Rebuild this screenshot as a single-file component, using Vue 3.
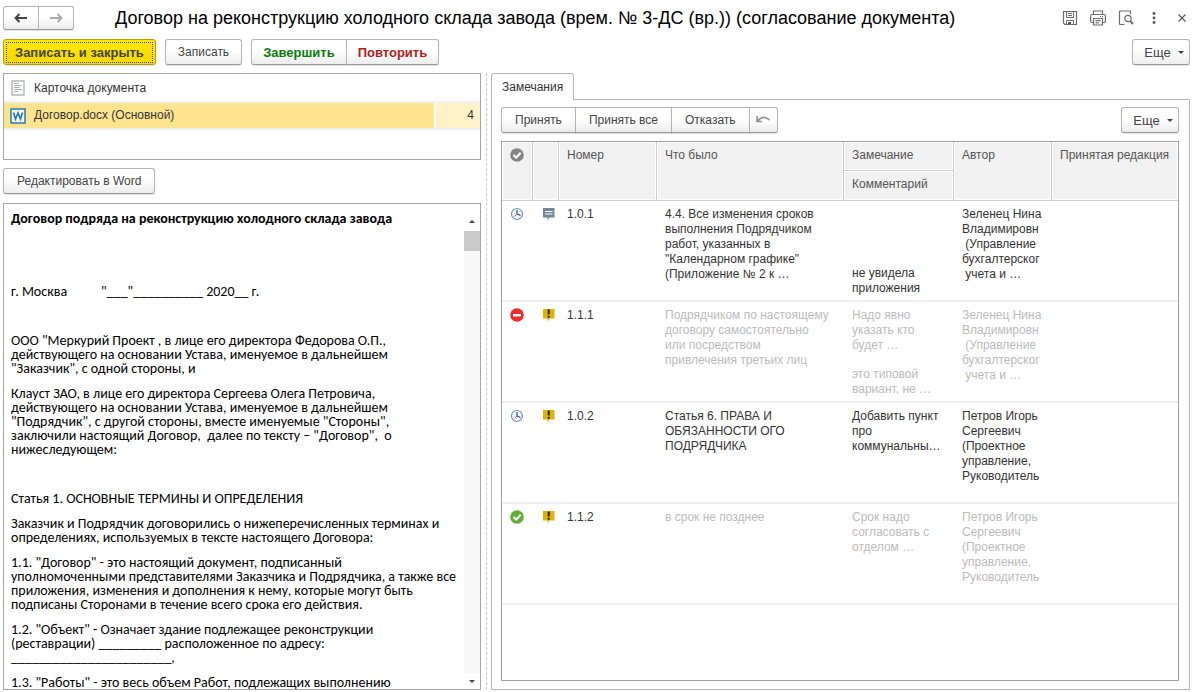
<script setup>
const remarks = [
  {
    number: '1.0.1', state: 'pending', kind: 'note', muted: false,
    was: '4.4. Все изменения сроков\nвыполнения Подрядчиком\nработ, указанных в\n"Календарном графике"\n(Приложение № 2 к …',
    remark: '',
    comment: 'не увидела\nприложения',
    author: 'Зеленец Нина\nВладимировн\n (Управление\nбухгалтерског\n учета и …'
  },
  {
    number: '1.1.1', state: 'rejected', kind: 'warning', muted: true,
    was: 'Подрядчиком по настоящему\nдоговору самостоятельно\nили посредством\nпривлечения третьих лиц',
    remark: 'Надо явно\nуказать кто\nбудет …',
    comment: 'это типовой\nвариант, не …',
    author: 'Зеленец Нина\nВладимировн\n (Управление\nбухгалтерског\n учета и …'
  },
  {
    number: '1.0.2', state: 'pending', kind: 'warning', muted: false,
    was: 'Статья 6. ПРАВА И\nОБЯЗАННОСТИ ОГО\nПОДРЯДЧИКА',
    remark: 'Добавить пункт\nпро\nкоммунальны…',
    comment: '',
    author: 'Петров Игорь\nСергеевич\n(Проектное\nуправление,\nРуководитель'
  },
  {
    number: '1.1.2', state: 'accepted', kind: 'warning', muted: true,
    was: 'в срок не позднее',
    remark: 'Срок надо\nсогласовать с\nотделом …',
    comment: '',
    author: 'Петров Игорь\nСергеевич\n(Проектное\nуправление,\nРуководитель'
  }
]

const paragraphs = [
  'ООО "Меркурий Проект , в лице его директора Федорова О.П.,\nдействующего на основании Устава, именуемое в дальнейшем\n"Заказчик", с одной стороны, и',
  'Клауст ЗАО, в лице его директора Сергеева Олега Петровича,\nдействующего на основании Устава, именуемое в дальнейшем\n"Подрядчик", с другой стороны, вместе именуемые "Стороны",\nзаключили настоящий Договор,  далее по тексту – "Договор",  о\nнижеследующем:'
]

const articles = [
  'Заказчик и Подрядчик договорились о нижеперечисленных терминах и\nопределениях, используемых в тексте настоящего Договора:',
  '1.1. "Договор" - это настоящий документ, подписанный\nуполномоченными представителями Заказчика и Подрядчика, а также все\nприложения, изменения и дополнения к нему, которые могут быть\nподписаны Сторонами в течение всего срока его действия.',
  '1.2. "Объект" - Означает здание подлежащее реконструкции\n(реставрации) _________ расположенное по адресу:\n_______________________,',
  '1.3. "Работы" - это весь объем Работ, подлежащих выполнению'
]
</script>

<template>
  <div class="window">
    <header class="titlebar">
      <div class="group nav">
        <button type="button" class="btn" aria-label="Назад">
          <svg width="14" height="10" viewBox="0 0 14 10"><path d="M1 5H13M5.500 1L1.500 5L5.500 9" fill="none" stroke="#444" stroke-width="2" /></svg>
        </button>
        <button type="button" class="btn" aria-label="Вперед">
          <svg width="14" height="10" viewBox="0 0 14 10"><path d="M1 5H13M8.500 1L12.500 5L8.500 9" fill="none" stroke="#aaa" stroke-width="2" /></svg>
        </button>
      </div>
      <h1>Договор на реконструкцию холодного склада завода (врем. № 3-ДС (вр.)) (согласование документа)</h1>
      <div class="tools">
        <button type="button" aria-label="Сохранить">
          <svg width="16" height="16" viewBox="0 0 16 16" fill="none" stroke="#6b6b6b">
            <path d="M1.500 1.500H14.500V14.500H3L1.500 13Z" stroke-width="1.200" />
            <path d="M4.500 1.500V7.500H11.500V1.500M6 3.500H10M6 5.500H10M4.500 14.500V10.500H11.500V14.500" />
            <path d="M6 12H9V14H6Z" fill="#555" stroke="none" />
          </svg>
        </button>
        <button type="button" aria-label="Печать">
          <svg width="16" height="16" viewBox="0 0 16 16" fill="none" stroke="#6b6b6b" stroke-width="1.200">
            <path d="M3.500 4.500V1H12.500V4.500M3.500 12.500H2Q.6 12.500.6 11V6Q.6 4.500 2 4.500H14Q15.400 4.500 15.400 6V11Q15.400 12.500 14 12.500H12.500" />
            <path d="M3.500 8.500H12.500V15H3.500ZM5.500 10.700H10.500M5.500 12.800H8.500M10 6.500H11M12 6.500H13" />
          </svg>
        </button>
        <button type="button" aria-label="Просмотр">
          <svg width="16" height="16" viewBox="0 0 16 16" fill="none" stroke="#6b6b6b">
            <path d="M6.500 14.500H2.500Q1.500 14.500 1.500 13.500V2Q1.500 1 2.500 1H12.500V4" stroke-width="1.200" />
            <circle cx="10" cy="8.500" r="3.200" stroke-width="1.200" />
            <path d="M12 11L15 14" stroke-width="1.800" />
          </svg>
        </button>
        <button type="button" aria-label="Меню">
          <svg width="16" height="16" viewBox="0 0 16 16" fill="#555"><circle cx="8" cy="3.500" r="1.400" /><circle cx="8" cy="8" r="1.400" /><circle cx="8" cy="12.500" r="1.400" /></svg>
        </button>
        <button type="button" aria-label="Закрыть">
          <svg width="16" height="16" viewBox="0 0 16 16"><path d="M4.500 4.500L11.500 11.500M11.500 4.500L4.500 11.500" stroke="#555" stroke-width="1.100" /></svg>
        </button>
      </div>
    </header>

    <div class="toolbar">
      <button type="button" class="btn primary"><span>Записать и закрыть</span></button>
      <button type="button" class="btn">Записать</button>
      <div class="group">
        <button type="button" class="btn finish">Завершить</button>
        <button type="button" class="btn repeat">Повторить</button>
      </div>
      <button type="button" class="btn more">Еще <i class="caret"></i></button>
    </div>

    <main class="content">
      <section class="left">
        <div class="files">
          <table>
            <tbody>
              <tr>
                <td class="file">
                  <div class="cell">
                    <svg width="16" height="16" viewBox="0 0 16 16">
                      <rect x="2" y="1" width="12" height="14" fill="#fff" stroke="#8a949e" />
                      <path d="M4 3.500H9M4 5.500H12M4 7.500H10M4 9.500H12M4 11.500H8" stroke="#aab1b8" />
                    </svg>
                    Карточка документа
                  </div>
                </td>
                <td class="count"></td>
              </tr>
              <tr class="selected">
                <td class="file">
                  <div class="cell">
                    <svg width="16" height="16" viewBox="0 0 16 16">
                      <rect x="1" y="1" width="14" height="14" fill="#f4f8fb" stroke="#2d77b5" stroke-width="1.500" />
                      <path d="M3.500 4.500L5.500 11L8 5L10.500 11L12.500 4.500" fill="none" stroke="#2d77b5" stroke-width="1.700" />
                    </svg>
                    Договор.docx (Основной)
                  </div>
                </td>
                <td class="count">4</td>
              </tr>
            </tbody>
          </table>
        </div>
        <button type="button" class="btn edit">Редактировать в Word</button>
        <div class="preview">
          <article class="doc">
            <h2>Договор подряда на реконструкцию холодного склада завода</h2>
            <p class="place"><span>г. Москва</span><span>"___"__________ 2020__ г.</span></p>
            <p v-for="text in paragraphs" :key="text">{{ text }}</p>
            <p class="chapter">Статья 1. ОСНОВНЫЕ ТЕРМИНЫ И ОПРЕДЕЛЕНИЯ</p>
            <p v-for="text in articles" :key="text">{{ text }}</p>
          </article>
          <div class="scrollbar">
            <button type="button" aria-label="Вверх"><i class="caret up"></i></button>
            <div class="track"><div class="thumb"></div></div>
            <button type="button" aria-label="Вниз"><i class="caret"></i></button>
          </div>
        </div>
      </section>

      <div class="splitter"></div>

      <section class="right">
        <div class="tabs" role="tablist">
          <button type="button" class="tab" role="tab" aria-selected="true">Замечания</button>
          <div class="rest"></div>
        </div>
        <div class="panel">
          <div class="actions">
            <div class="group">
              <button type="button" class="btn">Принять</button>
              <button type="button" class="btn">Принять все</button>
              <button type="button" class="btn">Отказать</button>
              <button type="button" class="btn undo" aria-label="Отменить">
                <svg width="16" height="12" viewBox="0 0 16 12"><path d="M2 2V7.500H7M2.500 7Q8 .5 14.500 6" fill="none" stroke="#8c979f" stroke-width="1.700" /></svg>
              </button>
            </div>
            <button type="button" class="btn more">Еще <i class="caret"></i></button>
          </div>
          <div class="grid">
            <table>
              <colgroup>
                <col class="c-state"><col class="c-kind"><col class="c-number"><col>
                <col class="c-remark"><col class="c-author"><col class="c-final">
              </colgroup>
              <thead>
                <tr>
                  <th rowspan="2" class="icon">
                    <svg width="14" height="14" viewBox="0 0 14 14"><circle cx="7" cy="7" r="6.800" fill="#858585" /><path d="M3.500 7L6.200 9.600L10.700 4.700" fill="none" stroke="#fff" stroke-width="2" /></svg>
                  </th>
                  <th rowspan="2"></th>
                  <th rowspan="2">Номер</th>
                  <th rowspan="2">Что было</th>
                  <th>Замечание</th>
                  <th rowspan="2">Автор</th>
                  <th rowspan="2">Принятая редакция</th>
                </tr>
                <tr><th class="sub">Комментарий</th></tr>
              </thead>
              <tbody>
                <tr v-for="row in remarks" :key="row.number" :class="{ muted: row.muted }">
                  <td class="icon">
                    <svg v-if="row.state === 'pending'" width="14" height="14" viewBox="0 0 14 14">
                      <circle cx="7" cy="7" r="5.500" fill="#eef6fb" stroke="#7397b4" stroke-width="1.200" />
                      <path d="M7 3V7L10.500 8.500" fill="none" stroke="#345" stroke-width="1.100" />
                      <path d="M7 7L4.500 9.500" stroke="#d44" />
                    </svg>
                    <svg v-else-if="row.state === 'rejected'" width="14" height="14" viewBox="0 0 14 14">
                      <circle cx="7" cy="7" r="6.800" fill="#ee2a2a" /><rect x="3" y="6" width="8" height="2.400" fill="#fff" />
                    </svg>
                    <svg v-else width="14" height="14" viewBox="0 0 14 14">
                      <circle cx="7" cy="7" r="6.800" fill="#5fae36" /><path d="M3.500 7L6.200 9.600L10.700 4.700" fill="none" stroke="#fff" stroke-width="2" />
                    </svg>
                  </td>
                  <td class="kind">
                    <svg v-if="row.kind === 'note'" width="14" height="14" viewBox="0 0 14 14">
                      <path d="M1 1H12.500V10.500H7.500L5.500 13.500V10.500H1Z" fill="#71879c" /><path d="M3 4.500H10.500M3 7H10.500" stroke="#fff" />
                    </svg>
                    <svg v-else width="14" height="14" viewBox="0 0 14 14">
                      <path d="M1 1H12.500V10.500H7.500L5.500 13.500V10.500H1Z" fill="#dfb400" /><path d="M6.700 1.500V6.500M6.700 7.700V9.700" stroke="#222" stroke-width="2" />
                    </svg>
                  </td>
                  <td class="number">{{ row.number }}</td>
                  <td>{{ row.was }}</td>
                  <td><div class="remark">{{ row.remark }}</div><div>{{ row.comment }}</div></td>
                  <td>{{ row.author }}</td>
                  <td></td>
                </tr>
              </tbody>
            </table>
          </div>
        </div>
      </section>
    </main>
  </div>
</template>

<style>
body {
  margin: 0;
  background: #fff;
}
</style>

<style scoped>
* {
  box-sizing: border-box;
}

.window {
  display: flex;
  flex-direction: column;
  height: 100vh;
  padding: 6px 10px 2px 3px;
  font: 12px/15px "Liberation Sans", Arial, sans-serif;
  color: #333;
}

button {
  font: inherit;
  color: inherit;
}

svg {
  display: block;
}

.titlebar {
  display: flex;
  align-items: center;
  height: 24px;
}

h1 {
  flex: 1;
  margin: 0 0 0 41px;
  font-size: 18px;
  line-height: 24px;
  font-weight: 400;
  color: #000;
  white-space: nowrap;
}

.tools {
  display: flex;
  gap: 12px;
}

.tools button {
  padding: 0;
  border: 0;
  background: none;
}

.btn {
  display: flex;
  align-items: center;
  justify-content: center;
  height: 26px;
  padding: 0 12px;
  border: 1px solid #b4b4b4;
  border-bottom-color: #999;
  border-radius: 3px;
  background: linear-gradient(#fff 45%, #ededed);
  box-shadow: 0 1px 1px rgba(0, 0, 0, 0.12);
  color: #444;
  white-space: nowrap;
}

.group {
  display: flex;
}

.group .btn + .btn {
  margin-left: -1px;
  border-top-left-radius: 0;
  border-bottom-left-radius: 0;
}

.group .btn:not(:last-child) {
  border-top-right-radius: 0;
  border-bottom-right-radius: 0;
}

.nav .btn {
  width: 36px;
  height: 24px;
  padding: 0;
}

.toolbar {
  display: flex;
  gap: 9px;
  margin-top: 9px;
}

.primary {
  padding: 2px;
  border-color: #b89c00;
  background: linear-gradient(#ffe800, #f5d800);
  font-size: 13px;
  font-weight: 700;
}

.primary span {
  padding: 2px 8px;
  border: 1px dotted #3b4a9c;
}

.finish,
.repeat {
  padding: 0 11px;
  font-size: 13px;
  font-weight: 700;
}

.finish {
  color: #0a7d0a;
}

.repeat {
  color: #b01c1c;
}

.more {
  gap: 7px;
  width: 58px;
  margin-left: auto;
  padding: 0 6px 0 12px;
  font-size: 13px;
}

.caret {
  border: 3px solid transparent;
  border-top-color: #444;
  border-bottom: 0;
}

.caret.up {
  border-top: 0;
  border-bottom: 3px solid #444;
}

.content {
  display: grid;
  grid-template-columns: 478fr 10px 699fr;
  flex: 1;
  min-height: 0;
  margin-top: 8px;
}

.left {
  display: flex;
  flex-direction: column;
  align-items: flex-start;
  min-width: 0;
  min-height: 0;
}

.files {
  width: 100%;
  height: 87px;
  padding-top: 1px;
  border: 1px solid #a6a6a6;
}

.files table {
  width: 100%;
  border-collapse: collapse;
}

.files td {
  height: 27px;
  padding: 0 6px;
  border-bottom: 2px solid #f0f0f4;
}

.files .cell {
  display: flex;
  align-items: center;
  gap: 8px;
}

.files .count {
  width: 45px;
  border-left: 2px solid #fff;
  text-align: right;
}

.selected .file {
  background: #ffe48f;
}

.selected .count {
  background: #fff1c8;
}

.edit {
  margin: 8px 0;
  padding: 0 13px;
}

.preview {
  display: flex;
  flex: 1;
  width: 100%;
  min-height: 0;
  margin-top: 1px;
  border: 1px solid #a6a6a6;
}

.doc {
  flex: 1;
  min-width: 0;
  padding: 8px 0 0 7px;
  overflow: hidden;
  font: 14px/14px Carlito, Calibri, "Noto Sans", sans-serif;
  color: #000;
  white-space: pre;
}

.doc h2 {
  margin: 0;
  font-size: 14px;
  line-height: 14px;
}

.doc p {
  margin: 0 0 11px;
}

.doc .place {
  display: flex;
  gap: 34px;
  margin: 59px 0 35px;
}

.doc .chapter {
  margin-top: 35px;
}

.scrollbar {
  display: flex;
  flex-direction: column;
  width: 16px;
}

.scrollbar button {
  display: flex;
  align-items: center;
  justify-content: center;
  height: 16px;
  padding: 0;
  border: 0;
  background: none;
}

.scrollbar button:first-child {
  height: 27px;
  padding-top: 8px;
}

.track {
  flex: 1;
  background: #f8f8f8;
}

.thumb {
  height: 20px;
  background: #c9c9c9;
}

.splitter {
  justify-self: center;
  border-left: 1px dashed #ccc;
}

.right {
  display: flex;
  flex-direction: column;
  min-width: 0;
  min-height: 0;
}

.tabs {
  display: flex;
}

.tab {
  height: 27px;
  padding: 0 10px;
  border: 1px solid #b4b4b4;
  border-bottom: 0;
  border-radius: 3px 3px 0 0;
  background: #fff;
}

.rest {
  flex: 1;
  border-bottom: 1px solid #b4b4b4;
}

.panel {
  display: flex;
  flex: 1;
  flex-direction: column;
  min-height: 0;
  padding: 7px 10px 8px 9px;
  border: 1px solid #b4b4b4;
  border-top: 0;
}

.actions {
  display: flex;
}

.actions .group .btn {
  padding: 0 13px;
}

.actions .group .undo {
  width: 29px;
  padding: 0;
}

.grid {
  flex: 1;
  min-height: 0;
  margin-top: 8px;
  overflow: hidden;
  border: 1px solid #a0a0a0;
}

.grid table {
  width: 100%;
  table-layout: fixed;
  border-collapse: separate;
  border-spacing: 0;
}

.c-state {
  width: 31px;
}

.c-kind {
  width: 26px;
}

.c-number,
.c-author {
  width: 98px;
}

.c-remark {
  width: 110px;
}

.c-final {
  width: 126px;
}

th {
  height: 29px;
  padding: 6px 0 0 8px;
  border-right: 1px solid #ccc;
  border-bottom: 1px solid #ccc;
  background: #f1f1f1;
  box-shadow: inset 0 0 0 1px #fff;
  font-weight: 400;
  text-align: left;
  vertical-align: top;
  white-space: nowrap;
  color: #555;
}

th.sub {
  height: 30px;
}

th[rowspan]:last-child {
  border-right: 0;
}

td {
  color: #333;
}

.grid td {
  height: 101px;
  padding: 6px 0 0 8px;
  border-bottom: 2px solid #eee;
  vertical-align: top;
  white-space: pre;
}

.grid .muted td {
  color: #bbb;
}

.grid .muted .number {
  color: #333;
}

.grid .kind {
  padding-left: 9px;
}

.remark {
  min-height: 59px;
}
</style>
